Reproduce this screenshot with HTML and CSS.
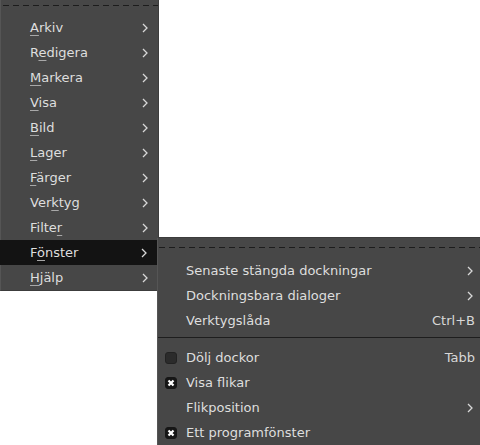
FILE: index.html
```html
<!DOCTYPE html>
<html>
<head>
<meta charset="utf-8">
<link rel="stylesheet" href="styles.css">
</head>
<body>
<div class="menu main">
  <div class="tearoff"></div>
  <div class="item"><span class="label"><u>A</u>rkiv</span><svg class="arrow" viewBox="0 0 6 10"><polyline points="1,1 5,5 1,9"/></svg></div>
  <div class="item"><span class="label">R<u>e</u>digera</span><svg class="arrow" viewBox="0 0 6 10"><polyline points="1,1 5,5 1,9"/></svg></div>
  <div class="item"><span class="label"><u>M</u>arkera</span><svg class="arrow" viewBox="0 0 6 10"><polyline points="1,1 5,5 1,9"/></svg></div>
  <div class="item"><span class="label"><u>V</u>isa</span><svg class="arrow" viewBox="0 0 6 10"><polyline points="1,1 5,5 1,9"/></svg></div>
  <div class="item"><span class="label"><u>B</u>ild</span><svg class="arrow" viewBox="0 0 6 10"><polyline points="1,1 5,5 1,9"/></svg></div>
  <div class="item"><span class="label"><u>L</u>ager</span><svg class="arrow" viewBox="0 0 6 10"><polyline points="1,1 5,5 1,9"/></svg></div>
  <div class="item"><span class="label"><u>F</u>ärger</span><svg class="arrow" viewBox="0 0 6 10"><polyline points="1,1 5,5 1,9"/></svg></div>
  <div class="item"><span class="label">Ver<u>k</u>tyg</span><svg class="arrow" viewBox="0 0 6 10"><polyline points="1,1 5,5 1,9"/></svg></div>
  <div class="item"><span class="label">Filte<u>r</u></span><svg class="arrow" viewBox="0 0 6 10"><polyline points="1,1 5,5 1,9"/></svg></div>
  <div class="item active"><span class="label">F<u>ö</u>nster</span><svg class="arrow" viewBox="0 0 6 10"><polyline points="1,1 5,5 1,9"/></svg></div>
  <div class="item"><span class="label"><u>H</u>jälp</span><svg class="arrow" viewBox="0 0 6 10"><polyline points="1,1 5,5 1,9"/></svg></div>
</div>

<div class="menu sub">
  <div class="tearoff"></div>
  <div class="item"><span class="check"></span><span class="label">Senaste stängda dockningar</span><svg class="arrow" viewBox="0 0 6 10"><polyline points="1,1 5,5 1,9"/></svg></div>
  <div class="item"><span class="check"></span><span class="label">Dockningsbara dialoger</span><svg class="arrow" viewBox="0 0 6 10"><polyline points="1,1 5,5 1,9"/></svg></div>
  <div class="item"><span class="check"></span><span class="label">Verktygslåda</span><span class="accel">Ctrl+B</span></div>
  <div class="separator"></div>
  <div class="item"><span class="check box"></span><span class="label">Dölj dockor</span><span class="accel">Tabb</span></div>
  <div class="item"><span class="check box on"><svg viewBox="0 0 12 12"><path d="M3.5 3.5 L8.5 8.5 M8.5 3.5 L3.5 8.5"/></svg></span><span class="label">Visa flikar</span></div>
  <div class="item"><span class="check"></span><span class="label">Flikposition</span><svg class="arrow" viewBox="0 0 6 10"><polyline points="1,1 5,5 1,9"/></svg></div>
  <div class="item"><span class="check box on"><svg viewBox="0 0 12 12"><path d="M3.5 3.5 L8.5 8.5 M8.5 3.5 L3.5 8.5"/></svg></span><span class="label">Ett programfönster</span></div>
</div>
</body>
</html>
```

FILE: styles.css
```css
html, body {
  margin: 0;
  padding: 0;
  background: #ffffff;
  width: 480px;
  height: 445px;
  overflow: hidden;
}
body {
  position: relative;
  font-family: "DejaVu Sans", sans-serif;
  font-size: 13px;
  color: #dedede;
}
.menu {
  background: #474747;
  box-sizing: border-box;
}
.main {
  width: 159px;
  height: 291px;
  border-left: 1px solid #555555;
  border-right: 1px solid #3c3c3c;
  border-bottom: 1px solid #3c3c3c;
  padding-top: 15px;
  position: relative;
}
.sub {
  position: absolute;
  left: 157px;
  top: 237px;
  width: 323px;
  height: 220px;
  border-left: 1px solid #555555;
  border-top: 1px solid #3c3c3c;
  padding-top: 20px;
}
.tearoff {
  position: absolute;
  top: 5px;
  left: 2px;
  right: 0;
  height: 1px;
  background: repeating-linear-gradient(90deg, #1c1c1c 0 6px, transparent 6px 10px);
}
.sub .tearoff {
  top: 9px;
  left: 1px;
}
.item {
  height: 25px;
  display: flex;
  align-items: center;
}
.main .item {
  padding-left: 29px;
  padding-right: 10px;
}
.main .item.active {
  background: #131313;
  margin-left: -1px;
  padding-left: 30px;
  margin-right: 1px;
}
.label {
  flex: 1;
  white-space: nowrap;
}
u {
  text-decoration: underline;
  text-decoration-color: #a8a8a8;
  text-underline-offset: 3px;
}
.arrow {
  width: 6px;
  height: 10px;
  flex: none;
}
.arrow polyline {
  fill: none;
  stroke: #d8d8d8;
  stroke-width: 1.3;
}
.sub .item {
  padding-left: 7px;
  padding-right: 6px;
}
.sub .arrow {
  margin-right: 1px;
}
.check {
  width: 12px;
  height: 12px;
  margin-right: 9px;
  flex: none;
  box-sizing: border-box;
}
.check.box {
  border-radius: 3px;
  background: #2b2b2b;
  border: 1px solid #222222;
}
.check.on {
  background: #161616;
  border-color: #161616;
}
.check svg {
  display: block;
  width: 10px;
  height: 10px;
}
.check.on {
  padding: 0;
}
.check.on svg {
  width: 12px;
  height: 12px;
  margin: -1px;
}
.check svg path {
  stroke: #ffffff;
  stroke-width: 2.2;
  fill: none;
}
.accel {
  color: #d8d8d8;
  margin-right: -1px;
}
.separator {
  height: 1px;
  background: #1e1e1e;
  margin: 4px 0 7px 0;
}
```
